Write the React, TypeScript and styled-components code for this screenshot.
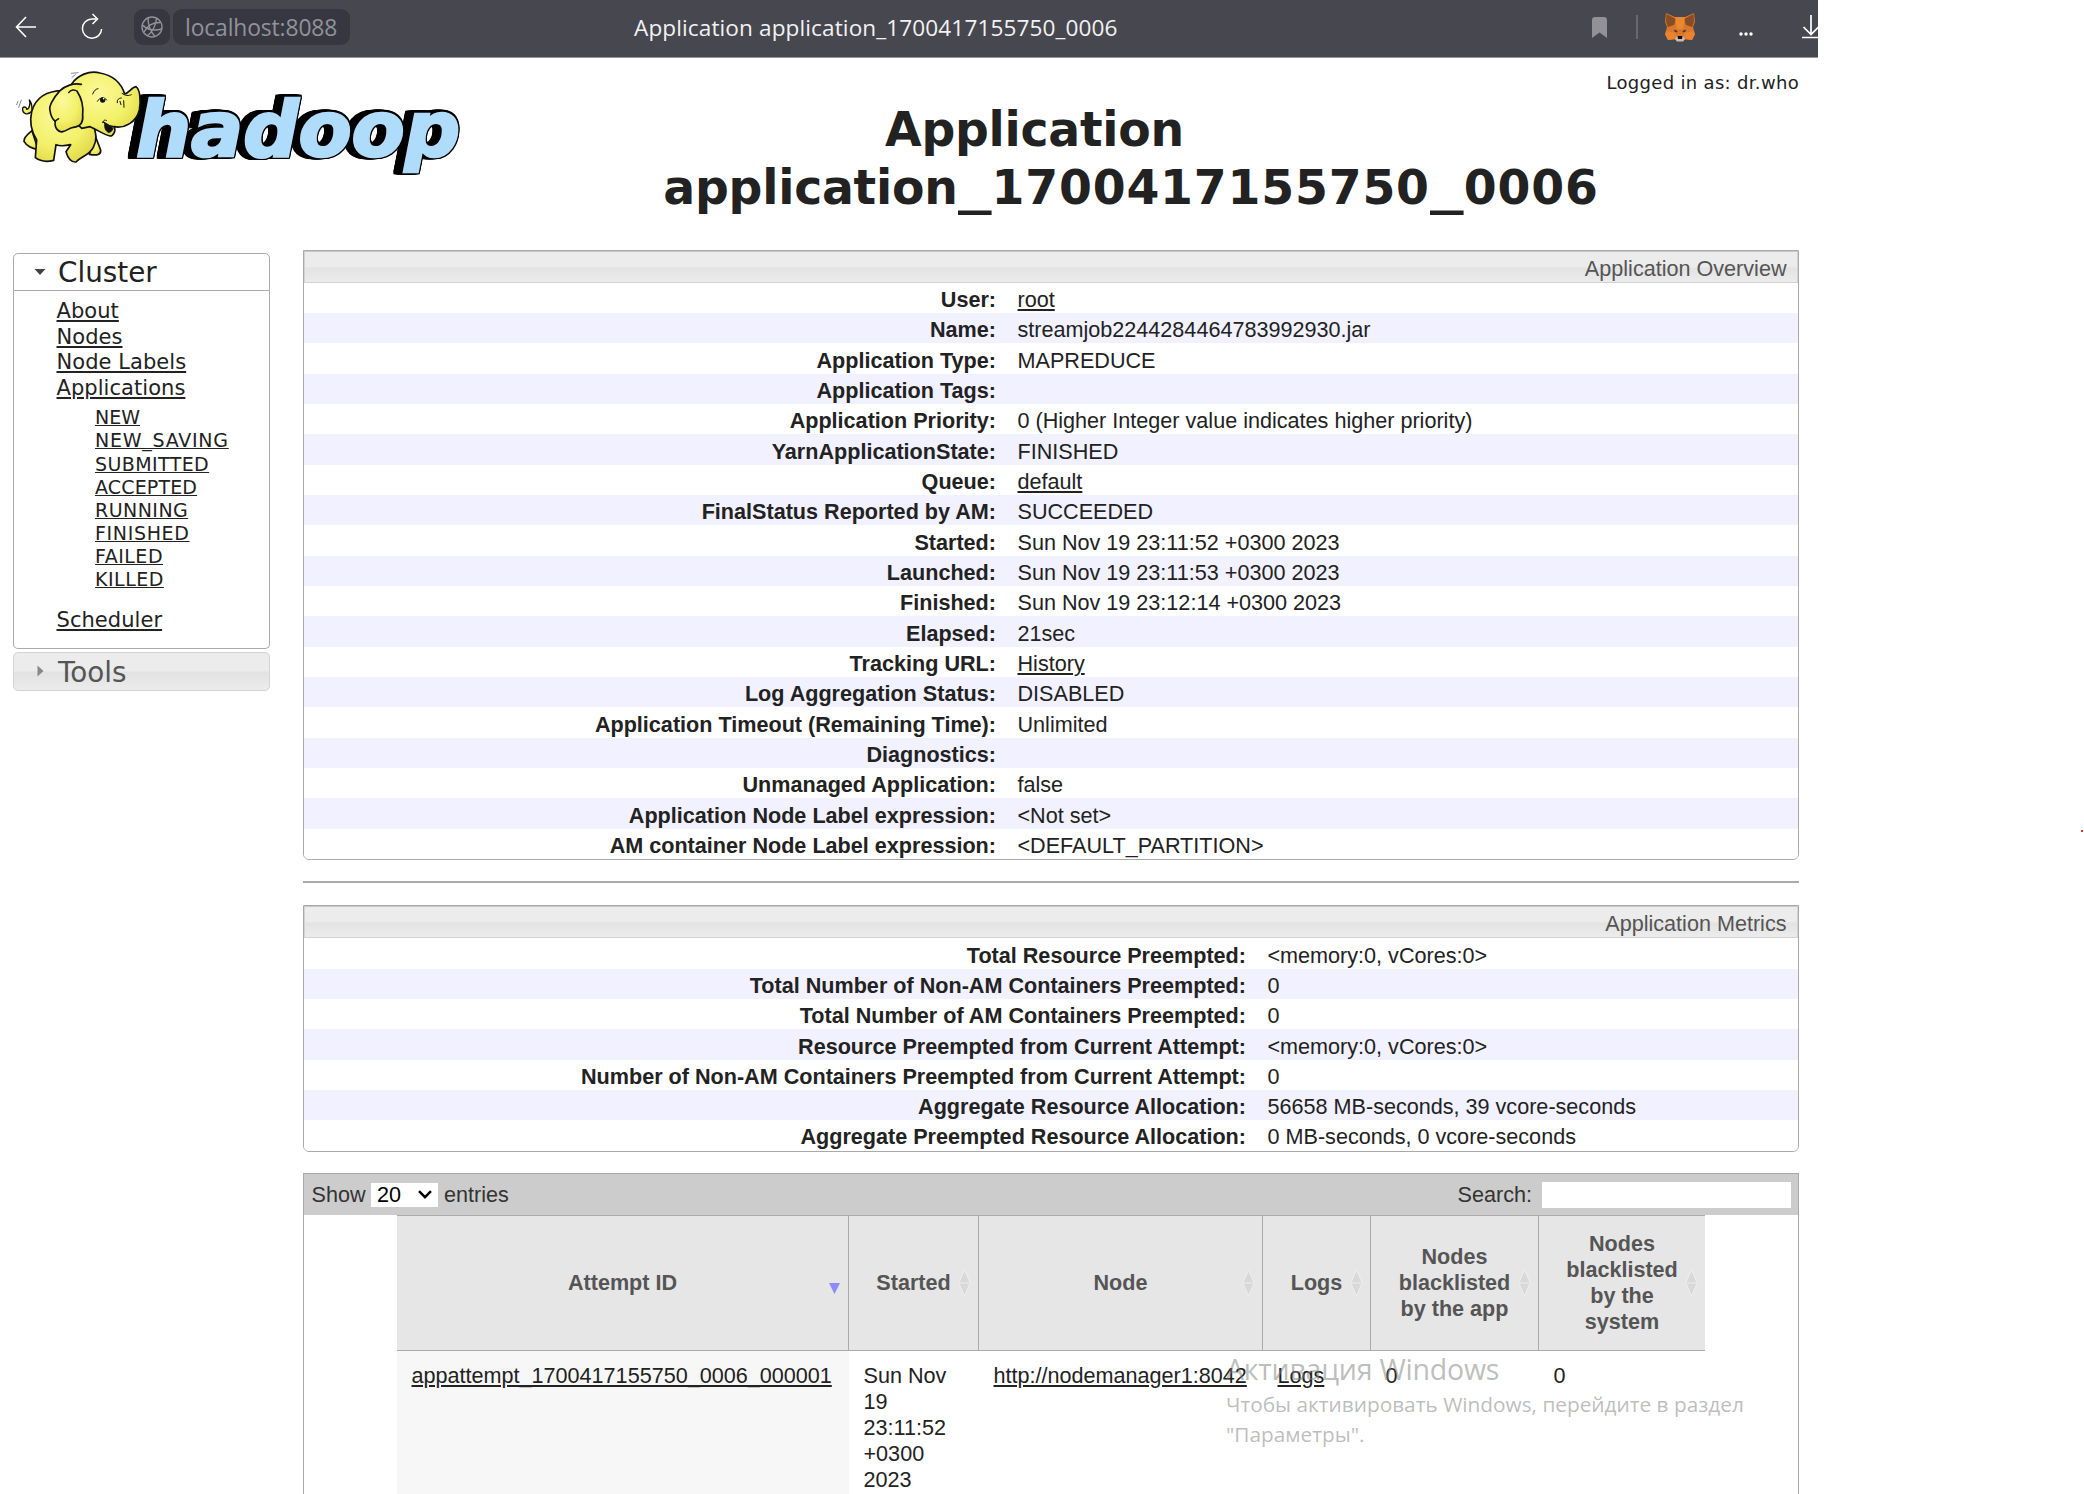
import React from "react";
import styled, { createGlobalStyle } from "styled-components";

const arial = `"Liberation Sans", Arial, sans-serif`;
const verdana = `"DejaVu Sans", Verdana, sans-serif`;
const segoe = `"Open Sans", "Noto Sans", sans-serif`;

const Global = createGlobalStyle`
  * { box-sizing: border-box; }
  body { margin: 0; background: #fff; overflow: hidden; }
`;

const Page = styled.div`
  position: relative;
  width: 2084px;
  height: 1494px;
  overflow: hidden;
  background: #fff;
  color: #222;
  font: 21.6px/26px ${arial};
`;

const Window = styled.div`
  width: 1818px;
  height: 1494px;
  overflow: hidden;
`;

/* Browser toolbar */
const Toolbar = styled.div`
  display: grid;
  grid-template-columns: 134px 36px 3px 177px 1fr 250px;
  align-items: center;
  height: 58px;
  padding-bottom: 3px;
  background: #47474f;
  border-bottom: 1px solid #98949a;
  font-family: ${segoe};
  overflow: hidden;
`;

const NavButtons = styled.div`
  display: flex;
  gap: 44px;
  padding-left: 15px;
`;

const SiteBadge = styled.div`
  display: flex;
  align-items: center;
  justify-content: center;
  height: 36px;
  border-radius: 9px;
  background: #363740;
`;

const Address = styled.div`
  grid-column: 4;
  height: 36px;
  padding-left: 12px;
  border-radius: 9px;
  background: #363740;
  color: #92929a;
  font-size: 22.8px;
  line-height: 37px;
  letter-spacing: -0.1px;
`;

const PageTitle = styled.div`
  padding-left: 284px;
  color: #f2f2f4;
  font-size: 22.6px;
  line-height: 37px;
  letter-spacing: 0.1px;
  white-space: nowrap;
`;

const Tools = styled.div`
  display: flex;
  align-items: center;
  height: 36px;
  padding-left: 24px;
  svg { flex: none; }
`;

/* Page header */
const Header = styled.header`
  display: grid;
  grid-template-columns: 480px 1fr;
  height: 191.7px;
`;

const UserLine = styled.div`
  padding: 12px 19px 0 0;
  height: 42.5px;
  text-align: right;
  font: 18px/26px ${verdana};
  letter-spacing: 0.32px;
`;

const Heading = styled.h1`
  margin: 0;
  padding-right: 36px;
  text-align: center;
  font: bold 47.3px/58px ${verdana};
`;

const HeadingLine = styled.div<{ $shift?: number }>`
  padding-right: ${(p) => p.$shift ?? 0}px;
`;

const Word = styled.span`
  letter-spacing: -0.25px;
`;

const Digits = styled.span`
  letter-spacing: 0.8px;
`;

const Underscore = styled.span`
  display: inline-block;
  width: 34px;
  text-align: left;
  transform: scaleX(1.42);
  transform-origin: left;
`;

/* Body */
const Body = styled.div`
  display: flex;
  align-items: flex-start;
`;

const Sidebar = styled.nav`
  width: 303px;
  padding: 3.3px 33px 0 13px;
  font-family: ${verdana};
`;

const SectionHead = styled.div<{ $open?: boolean }>`
  display: flex;
  align-items: center;
  height: ${(p) => (p.$open ? 38 : 39)}px;
  margin-top: ${(p) => (p.$open ? 0 : 3)}px;
  padding-left: 20px;
  gap: 12px;
  border: 1px solid ${(p) => (p.$open ? "#aaa" : "#d3d3d3")};
  border-radius: ${(p) => (p.$open ? "5px 5px 0 0" : "5px")};
  background: ${(p) =>
    p.$open ? "#fff" : "linear-gradient(#ececec 0 48%, #e2e2e2 52%, #ececec)"};
  color: ${(p) => (p.$open ? "#222" : "#555")};
  font-size: 27.8px;
  line-height: 36px;
`;

const SectionTitle = styled.span`
  padding-top: 3px;
`;

const SectionBody = styled.div`
  height: 358px;
  padding: 8px 0 0 42.5px;
  border: 1px solid #aaa;
  border-top: 0;
  border-radius: 0 0 5px 5px;
`;

const NavLink = styled.a<{ $gapTop?: number }>`
  display: block;
  margin-top: ${(p) => p.$gapTop ?? 0}px;
  font-size: 21px;
  line-height: 25.6px;
  letter-spacing: 0.05px;
  text-decoration: underline 2px;
  text-underline-offset: 2px;
`;

const SubList = styled.div`
  padding: 5px 0 0 38.5px;
`;

const SubLink = styled.a<{ $track: number }>`
  display: block;
  font-size: 19px;
  line-height: 23.1px;
  letter-spacing: ${(p) => p.$track}px;
  text-decoration: underline 1px;
  text-underline-offset: 1px;
  text-decoration-skip-ink: none;
`;

const Content = styled.main`
  width: 1496px;
`;

const Panel = styled.section`
  border: 1px solid #aaa;
  border-radius: 0 0 6px 6px;
  overflow: hidden;
`;

const PanelHead = styled.div`
  height: 32px;
  padding-right: 10.5px;
  border: 1px solid #d3d3d3;
  border-top-color: #c8c8c8;
  background: linear-gradient(#ececec 0 48%, #e3e3e3 54%, #ececec);
  color: #555;
  text-align: right;
  line-height: 33px;
`;

const InfoRow = styled.div<{ $split: number; $alt: boolean }>`
  display: grid;
  grid-template-columns: ${(p) => p.$split}px 1fr;
  column-gap: 21.5px;
  height: 30.333px;
  padding-top: 4.3px;
  background: ${(p) => (p.$alt ? "#f1f1ff" : "#fff")};
`;

const Label = styled.div`
  text-align: right;
  font-weight: bold;
`;

const Link = styled.a`
  text-decoration: underline 2px;
  text-underline-offset: 2px;
`;

const Rule = styled.hr`
  height: 2px;
  margin: 21px 0 22.3px;
  border: 0;
  background: #aaa;
`;

const DataTable = styled.section`
  margin-top: 21.3px;
  height: 340px;
  border: 1px solid #aaa;
`;

const TableBar = styled.div`
  display: flex;
  align-items: center;
  height: 41px;
  padding: 1px 7px 0 7.5px;
  background: #ccc;
  color: #333;
`;

const PageSize = styled.div`
  display: flex;
  align-items: center;
  justify-content: space-between;
  width: 67px;
  height: 24px;
  margin: 0 6px 0 5.5px;
  padding: 0 6px;
  background: #fff;
  color: #000;
`;

const SearchLabel = styled.span`
  margin-left: auto;
`;

const SearchBox = styled.input`
  width: 249px;
  height: 26px;
  margin-left: 10px;
  padding: 0;
  border: 0;
  background: #fff;
`;

const Columns = styled.div`
  display: grid;
  grid-template-columns: 452px 130px 284px 108px 168px 166px;
  width: 1308px;
  margin-left: 93px;
`;

const HeadCell = styled.div`
  position: relative;
  display: flex;
  align-items: center;
  justify-content: center;
  height: 136px;
  padding: 0 25px;
  border: 1px solid #aaa;
  border-left: 0;
  background: #e6e6e6;
  color: #555;
  font-weight: bold;
  text-align: center;
  &:last-child { border-right: 0; }
`;

const SortMark = styled.svg`
  position: absolute;
  right: 7.5px;
  top: 52px;
`;

const Cell = styled.div<{ $sorted?: boolean }>`
  height: 190px;
  padding: 12px 14.5px;
  white-space: nowrap;
  background: ${(p) => (p.$sorted ? "#f7f7f7" : "#fff")};
`;

/* Overlays */
const Watermark = styled.div`
  position: absolute;
  left: 1226px;
  top: 1348.5px;
  color: rgba(125, 125, 125, 0.52);
  font-family: ${segoe};
  white-space: nowrap;
`;

const WatermarkTitle = styled.div`
  font-size: 28.5px;
  line-height: 40px;
  letter-spacing: -0.22px;
`;

const WatermarkText = styled.div`
  font-size: 20.8px;
  line-height: 30px;
`;

const RedDot = styled.div`
  position: absolute;
  left: 2081px;
  top: 830px;
  width: 2px;
  height: 2px;
  background: #d33;
`;

const outline = [
  "drop-shadow(1.5px 0 0 #000)",
  "drop-shadow(-1.5px 0 0 #000)",
  "drop-shadow(0 1.5px 0 #000)",
  "drop-shadow(0 -1.5px 0 #000)",
  "drop-shadow(-4px 0 0 #000)",
  "drop-shadow(-3px 0 0 #000)",
].join(" ");

const Wordmark = styled.text`
  font: italic bold 77px ${verdana};
  fill: #b0dcfc;
  stroke: #b0dcfc;
  stroke-width: 2.6px;
  stroke-linejoin: miter;
  filter: ${outline};
`;

const HadoopLogo = () => (
  <svg width="480" height="132" viewBox="0 58 480 132">
    <defs>
      <radialGradient id="skin" cx="0.4" cy="0.35" r="0.75">
        <stop offset="0" stopColor="#fbfa9a" />
        <stop offset="0.6" stopColor="#f3f068" />
        <stop offset="1" stopColor="#ddd645" />
      </radialGradient>
    </defs>
    <Wordmark x="136" y="155.5" textLength="324" lengthAdjust="spacingAndGlyphs">
      hadoop
    </Wordmark>
    <g
      transform="translate(10 60) scale(0.33333)"
      fill="url(#skin)"
      stroke="#111"
      strokeWidth="5"
      strokeLinejoin="round"
      strokeLinecap="round"
    >
      <path d="M67 152C52 170 36 160 38 144C42 138 50 142 50 148C58 148 62 130 58 120C66 128 66 140 66 150Z" strokeWidth="4" />
      <path d="M66 212C54 222 40 232 42 244C50 258 68 268 84 268Z" />
      <path d="M255 226L272 270C274 284 262 287 238 283Z" />
      <path d="M160 92C110 92 76 114 65 155C58 186 66 218 80 240L76 293C92 305 112 306 131 301L138 254C152 260 168 257 182 254L168 275C174 295 184 307 198 306C212 290 238 286 250 262C262 240 258 222 252 200L215 90Z" />
      <path d="M240 200L215 205C190 190 175 110 185 72C202 46 238 30 270 39C308 46 334 70 344 102C356 100 364 82 378 80C390 88 393 120 388 150C380 186 344 206 312 200C319 212 310 228 300 228C280 224 264 210 240 200" />
      <path d="M214 73C190 68 165 78 150 92C128 116 116 140 120 151C122 168 128 178 136 184C132 204 146 218 158 215C172 212 178 203 190 202C214 200 220 184 218 165C221 134 212 110 202 95" />
      <g fill="none">
        <path d="M176 98C182 88 194 88 202 94M134 184L146 176" strokeWidth="4" />
        <path d="M280 186C288 192 298 198 312 200" strokeWidth="4" />
        <path d="M248 102C252 92 258 86 264 86" strokeWidth="3" />
        <path d="M262 124C268 112 284 110 290 120M336 100C346 108 356 108 364 104M322 128C320 120 326 114 334 114M341 122L342 142M330 124L333 134" strokeWidth="3" />
        <path d="M278 188C280 180 286 178 290 182" strokeWidth="3" />
        <path d="M24 124L20 134M34 120L26 142M184 40L204 38M186 52L196 44" stroke="#888" strokeWidth="3" />
      </g>
      <path d="M284 190C282 206 288 214 296 218C308 214 312 206 306 200C298 200 290 194 284 190Z" fill="#111" strokeWidth="2" />
      <ellipse cx="278" cy="120" rx="8" ry="8" fill="#111" stroke="none" />
      <circle cx="281" cy="116" r="2.5" fill="#fff" stroke="none" />
    </g>
  </svg>
);

const Fox = () => (
  <svg width="30" height="29" viewBox="0 0 30 29" style={{ marginLeft: 27 }}>
    <path d="M1 0L10 4H20L29 0L30 9L28 14L30 21L27 27L20 26L18 28H12L10 26L3 27L0 21L2 14L0 9Z" fill="#d9772c" />
    <path d="M1.500 1L11 6L9 12L3 14L1 9Z" fill="#8a4c22" />
    <path d="M28.500 1L19 6L21 12L27 14L29 9Z" fill="#8a4c22" />
    <path d="M10 4H20L18 16H12Z" fill="#e8892f" />
    <path d="M2 18L10 20L12 26L3 27L0 21Z" fill="#ea8330" />
    <path d="M28 18L20 20L18 26L27 27L30 21Z" fill="#ea8330" />
    <path d="M9 16.500L12.500 18L12 19.500L9.500 18.500Z" fill="#4a3528" />
    <path d="M21 16.500L17.500 18L18 19.500L20.500 18.500Z" fill="#4a3528" />
    <path d="M10 26L12 23H18L20 26L18 28.500H12Z" fill="#c9bdb3" />
    <path d="M12.500 23H17.500L17 26H13Z" fill="#111" />
  </svg>
);

const overview: [string, React.ReactNode][] = [
  ["User:", <Link key="u">root</Link>],
  ["Name:", "streamjob2244284464783992930.jar"],
  ["Application Type:", "MAPREDUCE"],
  ["Application Tags:", ""],
  ["Application Priority:", "0 (Higher Integer value indicates higher priority)"],
  ["YarnApplicationState:", "FINISHED"],
  ["Queue:", <Link key="q">default</Link>],
  ["FinalStatus Reported by AM:", "SUCCEEDED"],
  ["Started:", "Sun Nov 19 23:11:52 +0300 2023"],
  ["Launched:", "Sun Nov 19 23:11:53 +0300 2023"],
  ["Finished:", "Sun Nov 19 23:12:14 +0300 2023"],
  ["Elapsed:", "21sec"],
  ["Tracking URL:", <Link key="h">History</Link>],
  ["Log Aggregation Status:", "DISABLED"],
  ["Application Timeout (Remaining Time):", "Unlimited"],
  ["Diagnostics:", ""],
  ["Unmanaged Application:", "false"],
  ["Application Node Label expression:", "<Not set>"],
  ["AM container Node Label expression:", "<DEFAULT_PARTITION>"],
];

const metrics: [string, React.ReactNode][] = [
  ["Total Resource Preempted:", "<memory:0, vCores:0>"],
  ["Total Number of Non-AM Containers Preempted:", "0"],
  ["Total Number of AM Containers Preempted:", "0"],
  ["Resource Preempted from Current Attempt:", "<memory:0, vCores:0>"],
  ["Number of Non-AM Containers Preempted from Current Attempt:", "0"],
  ["Aggregate Resource Allocation:", "56658 MB-seconds, 39 vcore-seconds"],
  ["Aggregate Preempted Resource Allocation:", "0 MB-seconds, 0 vcore-seconds"],
];

const states: [string, number][] = [
  ["NEW", 0],
  ["NEW_SAVING", 0.75],
  ["SUBMITTED", 0.4],
  ["ACCEPTED", 0.15],
  ["RUNNING", 0.45],
  ["FINISHED", 0.65],
  ["FAILED", 0.5],
  ["KILLED", 0.5],
];

const headings = ["Attempt ID", "Started", "Node", "Logs", "Nodes blacklisted by the app", "Nodes blacklisted by the system"];

const InfoPanel = ({ title, rows, split }: { title: string; rows: [string, React.ReactNode][]; split: number }) => (
  <Panel>
    <PanelHead>{title}</PanelHead>
    {rows.map(([label, value], i) => (
      <InfoRow key={label} $split={split} $alt={i % 2 === 1}>
        <Label>{label}</Label>
        <div>{value}</div>
      </InfoRow>
    ))}
  </Panel>
);

export default function App() {
  return (
    <Page>
      <Global />
      <Window>
        <Toolbar>
          <NavButtons>
            <svg width="22" height="22" viewBox="0 0 22 22" fill="none" stroke="#fff" strokeWidth="1.6">
              <path d="M21 11H2M11 1L1.500 11L11 21" />
            </svg>
            <svg width="22" height="26" viewBox="0 0 22 26" fill="none" stroke="#fff" strokeWidth="1.5" style={{ marginTop: -3 }}>
              <path d="M15 6H11A9.600 9.600 0 1 0 20.600 16M11.500 1L16.500 6L11.500 11" />
            </svg>
          </NavButtons>
          <SiteBadge>
            <svg width="22" height="22" viewBox="0 0 22 22" fill="none" stroke="#92929a" strokeWidth="1.4">
              <circle cx="11" cy="11" r="10" />
              <path d="M7 2C7 9 9 15 14 20.500M15.500 2.500C15 9 12 15 6.500 20M1.500 9C6 14 14 15 20.500 13M3 16C6 10 12 6.500 19 6.500" />
            </svg>
          </SiteBadge>
          <Address>localhost:8088</Address>
          <PageTitle>Application application_1700417155750_0006</PageTitle>
          <Tools>
            <svg width="15" height="21" viewBox="0 0 15 21">
              <path d="M0 3Q0 0 3 0H12Q15 0 15 3V21L7.500 15.500L0 21Z" fill="#919197" />
            </svg>
            <svg width="2" height="24" style={{ marginLeft: 29 }}>
              <rect width="2" height="24" fill="#686870" />
            </svg>
            <Fox />
            <svg width="14" height="4" viewBox="0 0 14 4" style={{ margin: "14px 0 0 44px" }}>
              <g fill="#fff">
                <circle cx="2" cy="2" r="1.700" />
                <circle cx="7" cy="2" r="1.700" />
                <circle cx="12" cy="2" r="1.700" />
              </g>
            </svg>
            <svg width="20" height="24" viewBox="0 0 20 24" fill="none" stroke="#fff" strokeWidth="1.700" style={{ marginLeft: 49 }}>
              <path d="M9 0V19M1.500 12L9 19.500L16.500 12M0 22.500H18" />
            </svg>
          </Tools>
        </Toolbar>

        <Header>
          <HadoopLogo />
          <div>
            <UserLine>Logged in as: dr.who</UserLine>
            <Heading>
              <HeadingLine $shift={193}>
                <Word>Application</Word>
              </HeadingLine>
              <HeadingLine>
                <Word>application</Word>
                <Underscore>_</Underscore>
                <Digits>1700417155750</Digits>
                <Underscore>_</Underscore>
                <Digits>0006</Digits>
              </HeadingLine>
            </Heading>
          </div>
        </Header>

        <Body>
          <Sidebar>
            <SectionHead $open>
              <svg width="12" height="8" viewBox="0 0 12 8">
                <path d="M0.500 1H11.500L6 7Z" fill="#444" />
              </svg>
              <SectionTitle>Cluster</SectionTitle>
            </SectionHead>
            <SectionBody>
              <NavLink>About</NavLink>
              <NavLink>Nodes</NavLink>
              <NavLink>Node Labels</NavLink>
              <NavLink>Applications</NavLink>
              <SubList>
                {states.map(([name, track]) => (
                  <SubLink key={name} $track={track}>
                    {name}
                  </SubLink>
                ))}
              </SubList>
              <NavLink $gapTop={17}>Scheduler</NavLink>
            </SectionBody>
            <SectionHead>
              <svg width="12" height="12" viewBox="0 0 12 12">
                <path d="M3.500 0.500L9.500 6L3.500 11.500Z" fill="#888" />
              </svg>
              <SectionTitle>Tools</SectionTitle>
            </SectionHead>
          </Sidebar>

          <Content>
            <InfoPanel title="Application Overview" rows={overview} split={692} />
            <Rule />
            <InfoPanel title="Application Metrics" rows={metrics} split={942} />
            <DataTable>
              <TableBar>
                Show
                <PageSize>
                  20
                  <svg width="14" height="9" viewBox="0 0 14 9" fill="none" stroke="#000" strokeWidth="2.400">
                    <path d="M1 1.200L7 7.200L13 1.200" />
                  </svg>
                </PageSize>
                entries
                <SearchLabel>Search:</SearchLabel>
                <SearchBox />
              </TableBar>
              <Columns>
                {headings.map((name, i) => (
                  <HeadCell key={name}>
                    {name}
                    <SortMark width="13" height="30" viewBox="0 0 13 30">
                      {i === 0 ? (
                        <path d="M1 15H12L6.500 26Z" fill="#8c8cf8" />
                      ) : (
                        <path d="M6.500 2L12 14.500L12 15.500L6.500 28L1 15.500L1 14.500ZM1.500 15H11.500" fill="#d8d8d8" stroke="#efefef" />
                      )}
                    </SortMark>
                  </HeadCell>
                ))}
              </Columns>
              <Columns>
                <Cell $sorted>
                  <Link>appattempt_1700417155750_0006_000001</Link>
                </Cell>
                <Cell>
                  Sun Nov
                  <br />
                  19
                  <br />
                  23:11:52
                  <br />
                  +0300
                  <br />
                  2023
                </Cell>
                <Cell>
                  <Link>http://nodemanager1:8042</Link>
                </Cell>
                <Cell>
                  <Link>Logs</Link>
                </Cell>
                <Cell>0</Cell>
                <Cell>0</Cell>
              </Columns>
            </DataTable>
          </Content>
        </Body>
      </Window>
      <Watermark>
        <WatermarkTitle>Активация Windows</WatermarkTitle>
        <WatermarkText>Чтобы активировать Windows, перейдите в раздел</WatermarkText>
        <WatermarkText>"Параметры".</WatermarkText>
      </Watermark>
      <RedDot />
    </Page>
  );
}
